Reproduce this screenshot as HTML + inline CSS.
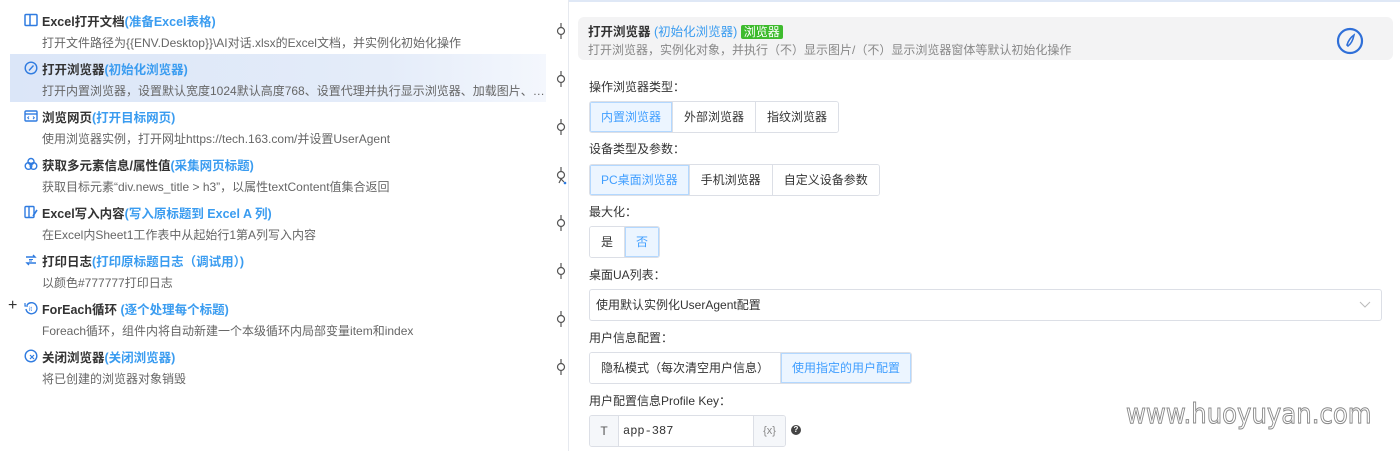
<!DOCTYPE html>
<html><head><meta charset="utf-8"><style>
*{box-sizing:border-box;margin:0;padding:0}
body{width:1400px;height:451px;overflow:hidden;background:#fff;font-family:"Liberation Sans","Noto Sans CJK SC",sans-serif;position:relative;color:#333}
.abs{position:absolute}
.row{position:absolute;left:10px;width:536px;height:48px}
.row.sel{background:linear-gradient(90deg,#dbe6f8 0%,#e4ecf9 70%,#f4f7fd 100%)}
.t{position:absolute;left:32px;top:5px;font-size:12.5px;font-weight:bold;color:#333;white-space:nowrap}
.t span{color:#3a9cf0}
.d{position:absolute;left:32px;top:28px;font-size:12px;color:#666;white-space:nowrap}
.ic{position:absolute;left:14px;top:7px;width:14px;height:14px}
.lbl{position:absolute;left:589px;font-size:12px;color:#333}
.bg{position:absolute;left:589px;display:flex;height:32px;border:1px solid #dcdfe6;border-radius:3px;overflow:hidden}
.bg div{padding:0 11px;line-height:30px;font-size:12px;color:#333;border-left:1px solid #dcdfe6;background:#fff}
.bg div:first-child{border-left:none}
.bg div.on{background:#ecf5ff;color:#409eff;box-shadow:inset 0 0 0 1px #b3d8ff}
</style></head><body>
<div class="abs" style="left:568px;top:0;width:1px;height:451px;background:#e6e9ef"></div>
<div class="abs" style="left:569px;top:0;width:831px;height:2px;background:#dfe8f6"></div>

<div class="row" style="top:6px"><svg class="ic" viewBox="0 0 14 14"><rect x="1" y="1.5" width="12" height="11" rx="1" fill="none" stroke="#2f7be0" stroke-width="1.5"/><line x1="6" y1="1.5" x2="6" y2="12.5" stroke="#2f7be0" stroke-width="1.5"/></svg><div class="t">Excel打开文档<span>(准备Excel表格)</span></div><div class="d">打开文件路径为{{ENV.Desktop}}\AI对话.xlsx的Excel文档，并实例化初始化操作</div></div>
<div class="row sel" style="top:54px"><svg class="ic" viewBox="0 0 14 14"><circle cx="7" cy="7" r="5.8" fill="none" stroke="#2f7be0" stroke-width="1.4"/><path d="M9.5 4.5 L5 9.5" stroke="#2f7be0" stroke-width="1.4"/></svg><div class="t">打开浏览器<span>(初始化浏览器)</span></div><div class="d">打开内置浏览器，设置默认宽度1024默认高度768、设置代理并执行显示浏览器、加载图片、…</div></div>
<div class="row" style="top:102px"><svg class="ic" viewBox="0 0 14 14"><rect x="1" y="2" width="12" height="10" rx="1" fill="none" stroke="#2f7be0" stroke-width="1.4"/><line x1="1" y1="5" x2="13" y2="5" stroke="#2f7be0" stroke-width="1.4"/><path d="M5 7.5l-1.3 1.3 1.3 1.3M9 7.5l1.3 1.3-1.3 1.3" fill="none" stroke="#2f7be0"/></svg><div class="t">浏览网页<span>(打开目标网页)</span></div><div class="d">使用浏览器实例，打开网址https://tech.163.com/并设置UserAgent</div></div>
<div class="row" style="top:150px"><svg class="ic" viewBox="0 0 14 14"><circle cx="4.5" cy="9" r="3.3" fill="none" stroke="#2f7be0" stroke-width="1.4"/><circle cx="9.5" cy="9" r="3.3" fill="none" stroke="#2f7be0" stroke-width="1.4"/><circle cx="7" cy="4.5" r="3" fill="none" stroke="#2f7be0" stroke-width="1.4"/></svg><div class="t">获取多元素信息/属性值<span>(采集网页标题)</span></div><div class="d">获取目标元素“div.news_title &gt; h3”，以属性textContent值集合返回</div></div>
<div class="row" style="top:198px"><svg class="ic" viewBox="0 0 14 14"><rect x="1" y="1.5" width="9" height="11" rx="1" fill="none" stroke="#2f7be0" stroke-width="1.4"/><line x1="5" y1="1.5" x2="5" y2="12.5" stroke="#2f7be0" stroke-width="1.4"/><path d="M9 11l4-6" stroke="#2f7be0" stroke-width="1.6"/></svg><div class="t">Excel写入内容<span>(写入原标题到 Excel A 列)</span></div><div class="d">在Excel内Sheet1工作表中从起始行1第A列写入内容</div></div>
<div class="row" style="top:246px"><svg class="ic" viewBox="0 0 14 14"><path d="M2 4h9l-2-2M12 10H3l2 2" fill="none" stroke="#2f7be0" stroke-width="1.4"/><path d="M5 6.5h4M5 8h3" stroke="#2f7be0"/></svg><div class="t">打印日志<span>(打印原标题日志（调试用）)</span></div><div class="d">以颜色#777777打印日志</div></div>
<div class="row" style="top:294px"><div class="abs" style="left:-2px;top:3px;font-size:16px;color:#333">+</div><svg class="ic" viewBox="0 0 14 14"><path d="M3 4a5.5 5.5 0 1 1-1 4" fill="none" stroke="#2f7be0" stroke-width="1.4"/><path d="M1 2v3h3" fill="none" stroke="#2f7be0" stroke-width="1.2"/><text x="5" y="10" font-size="6" fill="#2f7be0">it</text></svg><div class="t">ForEach循环 <span>(逐个处理每个标题)</span></div><div class="d">Foreach循环，组件内将自动新建一个本级循环内局部变量item和index</div></div>
<div class="row" style="top:342px"><svg class="ic" viewBox="0 0 14 14"><circle cx="7" cy="7" r="5.8" fill="none" stroke="#2f7be0" stroke-width="1.4"/><path d="M6 6l4 4M10 6l-4 4" stroke="#2f7be0" stroke-width="1.2"/></svg><div class="t">关闭浏览器<span>(关闭浏览器)</span></div><div class="d">将已创建的浏览器对象销毁</div></div>

<svg class="abs" style="left:552px;top:0" width="16" height="451" viewBox="0 0 16 451" fill="none" stroke="#555" stroke-width="1.2">
<g id="c"><line x1="9" y1="23" x2="9" y2="27"/><circle cx="9" cy="31" r="3.5"/><line x1="9" y1="35" x2="9" y2="39"/></g>
<use href="#c" y="48"/><use href="#c" y="96"/>
<g transform="translate(0,144)"><line x1="9" y1="23" x2="9" y2="27"/><circle cx="9" cy="31" r="3.5"/><path d="M9 35l-2 4M9 35l3 3"/><circle cx="13" cy="39" r="1.3" fill="#2f7be0" stroke="none"/></g>
<use href="#c" y="192"/><use href="#c" y="240"/><use href="#c" y="288"/><use href="#c" y="336"/>
</svg>

<div class="abs" style="left:578px;top:17px;width:815px;height:43px;background:#f3f3f4;border-radius:6px"></div>
<div class="abs" style="left:588px;top:21px;font-size:12.5px;font-weight:bold;color:#333;white-space:nowrap">打开浏览器 <span style="color:#3a9cf0;font-weight:normal">(初始化浏览器)</span> <span style="background:#3ebb2e;color:#fff;font-weight:normal;padding:0 3px;border-radius:2px;font-size:12px">浏览器</span></div>
<div class="abs" style="left:588px;top:41px;font-size:12px;color:#888;white-space:nowrap">打开浏览器，实例化对象，并执行（不）显示图片/（不）显示浏览器窗体等默认初始化操作</div>
<svg class="abs" style="left:1336px;top:27px" width="28" height="28" viewBox="0 0 28 28"><circle cx="14" cy="14" r="12" fill="none" stroke="#2f6fd8" stroke-width="2.2"/><path d="M18 8c-3 2-6 6-7 10l1 1c3-2 5-6 6-11z" fill="none" stroke="#2f6fd8" stroke-width="1.6"/></svg>

<div class="lbl" style="top:78px">操作浏览器类型：</div>
<div class="bg" style="top:101px"><div class="on">内置浏览器</div><div>外部浏览器</div><div>指纹浏览器</div></div>
<div class="lbl" style="top:140px">设备类型及参数：</div>
<div class="bg" style="top:164px"><div class="on">PC桌面浏览器</div><div>手机浏览器</div><div>自定义设备参数</div></div>
<div class="lbl" style="top:203px">最大化：</div>
<div class="bg" style="top:226px"><div>是</div><div class="on">否</div></div>
<div class="lbl" style="top:266px">桌面UA列表：</div>
<div class="abs" style="left:589px;top:289px;width:793px;height:32px;border:1px solid #dcdfe6;border-radius:3px;font-size:12px;line-height:30px;padding-left:6px;color:#333">使用默认实例化UserAgent配置<svg class="abs" style="right:10px;top:11px" width="12" height="8" viewBox="0 0 12 8"><path d="M1 1l5 5 5-5" fill="none" stroke="#bbb"/></svg></div>
<div class="lbl" style="top:329px">用户信息配置：</div>
<div class="bg" style="top:352px"><div>隐私模式（每次清空用户信息）</div><div class="on">使用指定的用户配置</div></div>
<div class="lbl" style="top:392px">用户配置信息Profile Key：</div>
<div class="abs" style="left:589px;top:415px;width:197px;height:32px;border:1px solid #dcdfe6;border-radius:3px;display:flex;font-size:12px;line-height:30px;overflow:hidden">
<div style="width:29px;background:#f5f7fa;border-right:1px solid #dcdfe6;text-align:center;color:#555">T</div>
<div style="width:134px;padding-left:4px;font-family:'Liberation Mono',monospace;color:#333">app-387</div>
<div style="flex:1;background:#f5f7fa;border-left:1px solid #dcdfe6;text-align:center;color:#888;font-size:11px">{x}</div></div>
<div class="abs" style="left:791px;top:425px;width:10px;height:10px;border-radius:50%;background:#444;color:#fff;font-size:8px;line-height:10px;text-align:center;font-weight:bold">?</div>
<div class="abs" style="left:1126px;top:397px;font-size:28px;color:#fff;-webkit-text-stroke:1px #888;font-family:'DejaVu Sans',sans-serif;white-space:nowrap;transform:scaleX(0.87);transform-origin:left">www.huoyuyan.com</div>
</body></html>
